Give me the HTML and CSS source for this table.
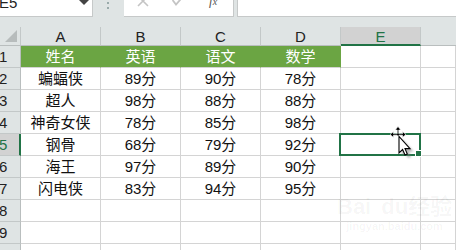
FILE: index.html
```html
<!DOCTYPE html>
<html lang="zh-CN">
<head>
<meta charset="utf-8">
<title>Excel</title>
<link rel="stylesheet" href="styles.css">
</head>
<body>
<div class="app">
  <div class="toolbar">
    <div class="namebox">
      <span class="nb-text">E5</span>
      <svg class="nb-arrow" width="10" height="5" viewBox="0 0 10 5"><polygon points="0,0 10,0 5,5" fill="#444"/></svg>
    </div>
    <div class="grip">
      <svg width="3" height="9" viewBox="0 0 3 9"><rect x="0" y="1" width="2" height="2" fill="#9aa"/><rect x="0" y="6" width="2" height="2" fill="#9aa"/></svg>
    </div>
    <div class="btnbox">
      <svg class="btn-x" width="12" height="8" viewBox="0 0 12 8"><path d="M1 -4 L11 6 M11 -4 L1 6" stroke="#c4c4c4" stroke-width="1.6" fill="none"/></svg>
      <svg class="btn-ok" width="12" height="8" viewBox="0 0 12 8"><path d="M0.5 0 L4 4.5 L11.5 -4" stroke="#c4c4c4" stroke-width="1.8" fill="none"/></svg>
      <span class="fx">f<span class="fx-x">x</span></span>
    </div>
    <div class="input"></div>
  </div>

  <div class="sheet">
    <div class="corner"><svg width="12" height="12" viewBox="0 0 12 12"><polygon points="12,0 12,12 0,12" fill="#b7bcbc"/></svg></div>
    <div class="ch">A</div>
    <div class="ch">B</div>
    <div class="ch">C</div>
    <div class="ch">D</div>
    <div class="ch ch-sel">E</div>
    <div class="ch ch-last"></div>

    <div class="rh">1</div>
    <div class="c head">姓名</div>
    <div class="c head">英语</div>
    <div class="c head">语文</div>
    <div class="c head">数学</div>
    <div class="c"></div>
    <div class="c"></div>

    <div class="rh">2</div>
    <div class="c">蝙蝠侠</div>
    <div class="c">89分</div>
    <div class="c">90分</div>
    <div class="c">78分</div>
    <div class="c"></div>
    <div class="c"></div>

    <div class="rh">3</div>
    <div class="c">超人</div>
    <div class="c">98分</div>
    <div class="c">88分</div>
    <div class="c">88分</div>
    <div class="c"></div>
    <div class="c"></div>

    <div class="rh">4</div>
    <div class="c">神奇女侠</div>
    <div class="c">78分</div>
    <div class="c">85分</div>
    <div class="c">98分</div>
    <div class="c"></div>
    <div class="c"></div>

    <div class="rh rh-sel">5</div>
    <div class="c">钢骨</div>
    <div class="c">68分</div>
    <div class="c">79分</div>
    <div class="c">92分</div>
    <div class="c active">
      <div class="selection"><span class="handle"></span></div>
      <svg class="cursor" width="28" height="34" viewBox="0 0 28 34">
        <defs>
          <filter id="sh" x="-50%" y="-50%" width="200%" height="200%"><feGaussianBlur stdDeviation="1.3"/></filter>
        </defs>
        <path d="M13 13 L13 30 L16.5 26.5 L19 32 L22 31 L19.5 25.5 L24.5 25.5 Z" fill="#777" opacity="0.55" filter="url(#sh)"/>
        <path d="M9 0.5 L6 4 L8.2 4 L8.2 7.7 L4.5 7.7 L4.5 5.5 L1 8.5 L4.5 11.5 L4.5 9.3 L8.2 9.3 L8.2 10 L9.8 10 L9.8 9.3 L13.5 9.3 L13.5 11.5 L17 8.5 L13.5 5.5 L13.5 7.7 L9.8 7.7 L9.8 4 L12 4 Z" fill="#000" stroke="#fff" stroke-width="0.7"/>
        <path d="M10 10.5 L10 27 L13.6 23.5 L16 29 L18.3 28 L16 22.6 L21 22.6 Z" fill="#fff" stroke="#000" stroke-width="1.1" stroke-linejoin="miter"/>
      </svg>
    </div>
    <div class="c"></div>

    <div class="rh">6</div>
    <div class="c">海王</div>
    <div class="c">97分</div>
    <div class="c">89分</div>
    <div class="c">90分</div>
    <div class="c"></div>
    <div class="c"></div>

    <div class="rh">7</div>
    <div class="c">闪电侠</div>
    <div class="c">83分</div>
    <div class="c">94分</div>
    <div class="c">95分</div>
    <div class="c"></div>
    <div class="c"></div>

    <div class="rh">8</div>
    <div class="c"></div>
    <div class="c"></div>
    <div class="c"></div>
    <div class="c"></div>
    <div class="c wm-cell">
      <div class="watermark">
        <span class="wm-big">Bai<span class="wm-du">du</span>经验</span>
        <span class="wm-small">jingyan.baidu.com</span>
      </div>
    </div>
    <div class="c"></div>

    <div class="rh">9</div>
    <div class="c"></div>
    <div class="c"></div>
    <div class="c"></div>
    <div class="c"></div>
    <div class="c"></div>
    <div class="c"></div>

    <div class="rh">10</div>
    <div class="c"></div>
    <div class="c"></div>
    <div class="c"></div>
    <div class="c"></div>
    <div class="c"></div>
    <div class="c"></div>
  </div>
</div>
</body>
</html>
```

FILE: styles.css
```css
html, body {
  margin: 0;
  padding: 0;
  background: #ffffff;
}

body {
  width: 456px;
  height: 250px;
  overflow: hidden;
  font-family: "Liberation Sans", "Noto Sans CJK SC", sans-serif;
}

.app {
  width: 456px;
  height: 250px;
  overflow: hidden;
  background: #ffffff;
}

/* ---------- formula bar ---------- */
.toolbar {
  height: 27px;
  background: #dfe4e4;
  display: flex;
  align-items: flex-start;
}

.namebox {
  width: 92px;
  height: 16px;
  background: #ffffff;
  border-right: 1px solid #c6c9c9;
  border-bottom: 1px solid #c6c9c9;
  box-sizing: content-box;
  display: flex;
  align-items: flex-start;
  justify-content: space-between;
}

.nb-text {
  font-size: 15px;
  line-height: 15px;
  margin-top: -5px;
  margin-left: -1px;
  color: #222;
}

.nb-arrow {
  margin-right: 3px;
}

.grip {
  width: 31px;
  display: flex;
  justify-content: center;
  padding-top: 1px;
}

.btnbox {
  width: 109px;
  height: 16px;
  background: #ffffff;
  border-right: 1px solid #c6c9c9;
  border-bottom: 1px solid #c6c9c9;
  display: flex;
  align-items: flex-start;
  overflow: hidden;
}

.btn-x {
  margin-left: 13px;
}

.btn-ok {
  margin-left: 23px;
}

.fx {
  margin-left: 25px;
  margin-top: -6px;
  font-family: "Liberation Serif", serif;
  font-style: italic;
  font-size: 13px;
  line-height: 14px;
  color: #555;
}

.fx-x {
  font-size: 10px;
}

.input {
  margin-left: 3px;
  flex: 1;
  height: 16px;
  background: #ffffff;
  border-left: 1px solid #c6c9c9;
  border-bottom: 1px solid #c6c9c9;
}

/* ---------- sheet ---------- */
.sheet {
  display: grid;
  grid-template-columns: 21px 80px 80px 80px 80px 80px 1fr;
  grid-template-rows: 19px repeat(9, 22px);
}

.sheet > div {
  box-sizing: border-box;
}

.corner {
  background: #dfe4e4;
  border-right: 1px solid #c3c8c8;
  border-bottom: 1px solid #b9bebe;
  display: flex;
  align-items: flex-end;
  justify-content: flex-end;
  padding: 0 3px 3px 0;
}

.ch {
  background: #dfe4e4;
  border-right: 1px solid #c3c8c8;
  border-bottom: 1px solid #b9bebe;
  color: #222;
  font-size: 15px;
  line-height: 18px;
  text-align: center;
  padding-top: 1px;
}

.ch-sel {
  background: #d2d2d2;
  color: #217346;
  border-bottom: 2px solid #217346;
}

.ch-last {
  border-right: none;
}

.rh {
  background: #dfe4e4;
  border-right: 1px solid #b9bebe;
  border-bottom: 1px solid #c3c8c8;
  color: #222;
  font-size: 15px;
  line-height: 21px;
  text-align: left;
  text-indent: -1px;
}

.rh-sel {
  background: #d2d2d2;
  color: #217346;
  border-right: 2px solid #217346;
}

.c {
  border-right: 1px solid #d4d4d4;
  border-bottom: 1px solid #d4d4d4;
  font-size: 15px;
  line-height: 21px;
  text-align: center;
  color: #111;
  white-space: nowrap;
}

.head {
  background: #6ba543;
  border-right-color: #6ba543;
  color: #ffffff;
}

.active {
  position: relative;
}

.selection {
  position: absolute;
  left: -2px;
  top: -1px;
  right: -1px;
  bottom: -1px;
  border: 2px solid #217346;
  z-index: 2;
}

.handle {
  position: absolute;
  right: -3px;
  bottom: -3px;
  width: 5px;
  height: 5px;
  background: #217346;
  border: 1px solid #ffffff;
}

.cursor {
  position: absolute;
  left: 48px;
  top: -8px;
  z-index: 3;
}

.wm-cell {
  position: relative;
}

.watermark {
  position: absolute;
  left: -4px;
  top: -6px;
  display: flex;
  flex-direction: column;
  align-items: center;
  color: rgba(0, 0, 0, 0.045);
  z-index: 1;
  pointer-events: none;
}

.wm-big {
  font-size: 22px;
  line-height: 26px;
  font-weight: bold;
}

.wm-du {
  margin-left: 10px;
}

.wm-small {
  font-size: 11px;
  line-height: 13px;
  font-weight: bold;
}
```
